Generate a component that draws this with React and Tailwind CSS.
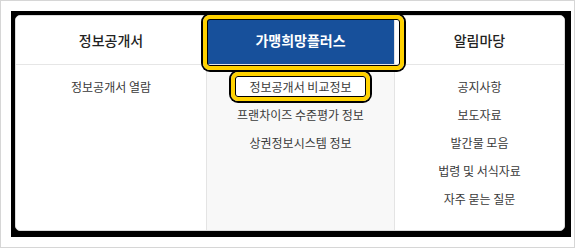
const COLS = [
  {
    title: '정보공개서',
    items: ['정보공개서 열람'],
  },
  {
    title: '가맹희망플러스',
    items: ['정보공개서 비교정보', '프랜차이즈 수준평가 정보', '상권정보시스템 정보'],
    active: true,
  },
  {
    title: '알림마당',
    items: ['공지사항', '보도자료', '발간물 모음', '법령 및 서식자료', '자주 묻는 질문'],
  },
]

// Yellow call-out ring drawn over a highlighted element.
const mark = 'absolute rounded-[7px] border-4 border-[#ffd200] shadow-[0_0_0_2px_#000,inset_0_0_0_1px_#000] pointer-events-none'

export default function App() {
  return (
    <div
      className="w-[578px] h-[249px] bg-white"
      style={{ fontFamily: '"Noto Sans CJK KR", "Noto Sans", sans-serif' }}
    >
      <div className="w-[575px] h-[248px] border border-[#d6d6d6] bg-white pt-[10px] pl-[10px]">
        <div className="w-[560px] h-[226px] bg-black pt-[4px] pl-[4px] pr-[6px] pb-[6px]">
          <div className="h-full bg-white rounded-[5px] border border-[#dcdcdc] flex overflow-hidden">
            {COLS.map((c, i) => (
              <div
                key={c.title}
                className={`flex flex-col ${i === 0 ? 'w-[190px]' : i === 1 ? 'w-[189px] bg-[#f8f8f8] border-x border-[#e4e4e4]' : 'flex-1'}`}
              >
                <div
                  className={`relative h-[49px] flex items-center justify-center border-b border-[#e6e6e6] text-[14px] ${
                    c.active ? 'bg-[#17509b] text-white font-bold' : 'bg-white text-[#222] font-medium'
                  }`}
                >
                  {c.title}
                </div>
                <div className="pt-[8px] flex flex-col">
                  {c.items.map((t, j) => (
                    <div
                      key={t}
                      className={`relative h-[28px] flex items-center justify-center text-[12px] text-[#3a3a3a] ${
                        c.active && j === 0 ? 'bg-white mx-[27px]' : ''
                      }`}
                    >
                      {t}
                      {c.active && j === 0 && <span className={`${mark} -left-[3px] -right-[3px] -top-[1px] bottom-0`} />}
                    </div>
                  ))}
                </div>
              </div>
            ))}
          </div>
        </div>
      </div>
      {/* header call-out sits over the column edges */}
      <span className={`${mark} left-[203px] top-[15px] w-[201px] h-[55px]`} />
    </div>
  )
}
